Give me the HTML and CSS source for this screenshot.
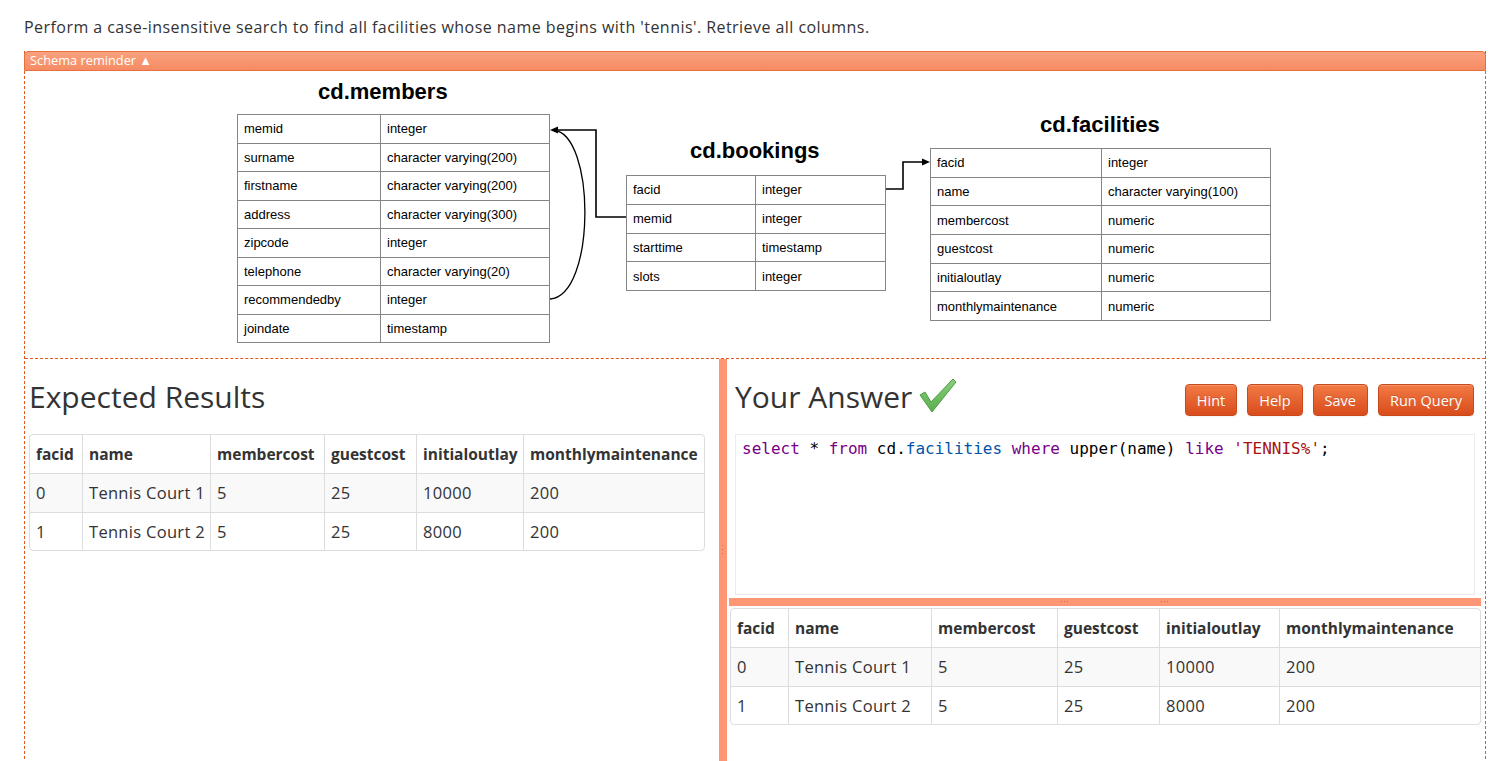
FILE: index.html
```html
<!DOCTYPE html>
<html>
<head>
<meta charset="utf-8">
<link rel="stylesheet" href="styles.css">
</head>
<body>
<div class="page">
  <p class="question">Perform a case-insensitive search to find all facilities whose name begins with 'tennis'. Retrieve all columns.</p>
  <div class="frame">
    <div class="schema-bar">Schema reminder ▲</div>
    <div class="schema">
      <div class="title t-members">cd.members</div>
      <div class="title t-bookings">cd.bookings</div>
      <div class="title t-facilities">cd.facilities</div>

      <table class="erd erd-members">
        <tr><td class="c1">memid</td><td>integer</td></tr>
        <tr><td class="c1">surname</td><td>character varying(200)</td></tr>
        <tr><td class="c1">firstname</td><td>character varying(200)</td></tr>
        <tr><td class="c1">address</td><td>character varying(300)</td></tr>
        <tr><td class="c1">zipcode</td><td>integer</td></tr>
        <tr><td class="c1">telephone</td><td>character varying(20)</td></tr>
        <tr><td class="c1">recommendedby</td><td>integer</td></tr>
        <tr><td class="c1">joindate</td><td>timestamp</td></tr>
      </table>

      <table class="erd erd-bookings">
        <tr><td class="c1">facid</td><td>integer</td></tr>
        <tr><td class="c1">memid</td><td>integer</td></tr>
        <tr><td class="c1">starttime</td><td>timestamp</td></tr>
        <tr><td class="c1">slots</td><td>integer</td></tr>
      </table>

      <table class="erd erd-facilities">
        <tr><td class="c1">facid</td><td>integer</td></tr>
        <tr><td class="c1">name</td><td>character varying(100)</td></tr>
        <tr><td class="c1">membercost</td><td>numeric</td></tr>
        <tr><td class="c1">guestcost</td><td>numeric</td></tr>
        <tr><td class="c1">initialoutlay</td><td>numeric</td></tr>
        <tr><td class="c1">monthlymaintenance</td><td>numeric</td></tr>
      </table>

      <svg class="links" width="1460" height="288" viewBox="0 0 1460 288">
        <path d="M601 146 H571 V59 H530" fill="none" stroke="#000" stroke-width="1.6"/>
        <path d="M525 59 L533 55.5 L533 62.5 Z" fill="#000"/>
        <path d="M525 228 C571 225 571 62 528 59" fill="none" stroke="#000" stroke-width="1.3"/>
        <path d="M861 118 H878 V91 H899" fill="none" stroke="#000" stroke-width="1.6"/>
        <path d="M905 91 L897 87.5 L897 94.5 Z" fill="#000"/>
      </svg>
    </div>

    <div class="lower">
      <div class="pane-left">
        <h2 class="heading">Expected Results</h2>
        <table class="results results-left">
          <colgroup>
            <col class="w-l1"><col class="w-l2"><col class="w-l3"><col class="w-l4"><col class="w-l5"><col class="w-l6">
          </colgroup>
          <thead>
            <tr><th>facid</th><th>name</th><th>membercost</th><th>guestcost</th><th>initialoutlay</th><th>monthlymaintenance</th></tr>
          </thead>
          <tbody>
            <tr><td>0</td><td>Tennis Court 1</td><td>5</td><td>25</td><td>10000</td><td>200</td></tr>
            <tr><td>1</td><td>Tennis Court 2</td><td>5</td><td>25</td><td>8000</td><td>200</td></tr>
          </tbody>
        </table>
      </div>

      <div class="vsplit"><span class="grip-v"></span></div>

      <div class="pane-right">
        <div class="answer-head">
          <h2 class="heading">Your Answer
            <svg class="check" width="38" height="36" viewBox="0 0 38 36">
              <defs>
                <linearGradient id="g" x1="0" y1="0" x2="0" y2="1">
                  <stop offset="0" stop-color="#86d07a"/>
                  <stop offset="1" stop-color="#5aae4d"/>
                </linearGradient>
              </defs>
              <path d="M1 17 L6 14 L12 24 L34 1 L37 4 L13 34 Z" fill="url(#g)" stroke="#4f9c44" stroke-width="1" stroke-linejoin="round"/>
            </svg>
          </h2>
          <div class="buttons">
            <button class="btn">Hint</button>
            <button class="btn">Help</button>
            <button class="btn">Save</button>
            <button class="btn">Run Query</button>
          </div>
        </div>
        <div class="editor"><span class="kw">select</span> * <span class="kw">from</span> cd.<span class="v2">facilities</span> <span class="kw">where</span> upper(name) <span class="kw">like</span> <span class="str">'TENNIS%'</span>;</div>
        <div class="hsplit"><span class="grip-h g1"></span><span class="grip-h g2"></span></div>
        <table class="results results-right">
          <colgroup>
            <col class="w-r1"><col class="w-r2"><col class="w-r3"><col class="w-r4"><col class="w-r5"><col class="w-r6">
          </colgroup>
          <thead>
            <tr><th>facid</th><th>name</th><th>membercost</th><th>guestcost</th><th>initialoutlay</th><th>monthlymaintenance</th></tr>
          </thead>
          <tbody>
            <tr><td>0</td><td>Tennis Court 1</td><td>5</td><td>25</td><td>10000</td><td>200</td></tr>
            <tr><td>1</td><td>Tennis Court 2</td><td>5</td><td>25</td><td>8000</td><td>200</td></tr>
          </tbody>
        </table>
      </div>
    </div>
  </div>
</div>
</body>
</html>
```

FILE: styles.css
```css
html, body {
  margin: 0;
  padding: 0;
  background: #fff;
  overflow: hidden;
}
body {
  font-family: "Open Sans", "Noto Sans", sans-serif;
  color: #333;
}
.page {
  padding: 0 16px 0 24px;
}
.question {
  margin: 0;
  padding-top: 16px;
  height: 35px;
  line-height: 22px;
  font-size: 16px;
  letter-spacing: 0.45px;
  color: #333;
}
.frame {
  border-left: 1px dashed #e2571f;
  border-right: 1px dashed #e2571f;
  border-top: none;
}
.schema-bar {
  margin: 0 -1px;
  height: 18px;
  line-height: 17px;
  border: 1px solid #e8703f;
  border-radius: 4px 4px 0 0;
  background: linear-gradient(#f9a27e, #f58b63);
  color: #fff;
  font-size: 12.8px;
  padding-left: 5px;
}
.schema {
  position: relative;
  height: 287px;
  border-bottom: 1px dashed #e2571f;
  font-family: "Liberation Sans", Arial, sans-serif;
  color: #000;
}
.title {
  position: absolute;
  font-weight: bold;
  font-size: 22px;
  line-height: 26px;
  white-space: nowrap;
}
.t-members { left: 293px; top: 8px; }
.t-bookings { left: 665px; top: 67px; }
.t-facilities { left: 1015px; top: 41px; }

.erd {
  position: absolute;
  border-collapse: collapse;
  font-size: 13px;
  table-layout: fixed;
}
.erd td {
  border: 1px solid #858585;
  padding: 0 0 0 6px;
  white-space: nowrap;
}
.erd-members { left: 212px; top: 43px; width: 313px; height: 228px; }
.erd-members .c1 { width: 136px; }
.erd-members tr { height: 28.5px; }
.erd-bookings { left: 601px; top: 104px; width: 260px; height: 115px; }
.erd-bookings .c1 { width: 122px; }
.erd-bookings tr { height: 28.75px; }
.erd-facilities { left: 905px; top: 77px; width: 341px; height: 172px; }
.erd-facilities .c1 { width: 164px; }
.erd-facilities tr { height: 28.66px; }

.links {
  position: absolute;
  left: 0;
  top: 0;
  pointer-events: none;
}

.lower {
  display: flex;
  height: 420px;
}
.pane-left {
  flex: none;
  width: 690px;
  padding: 18px 0 0 4px;
}
.heading {
  margin: 0;
  font-weight: normal;
  font-size: 30px;
  line-height: 40px;
  height: 40px;
  color: #333;
  display: flex;
  align-items: center;
  white-space: nowrap;
}
.check {
  margin-left: 7px;
  margin-top: -2px;
}
.pane-left .heading {
  margin-bottom: 17px;
}
.vsplit {
  position: relative;
  width: 8px;
  background: #fd9674;
  flex: none;
}
.grip-v {
  position: absolute;
  left: 3px;
  top: 186px;
  width: 1px;
  height: 10px;
  background: repeating-linear-gradient(#c2704f 0 1px, transparent 1px 4px);
}
.pane-right {
  flex: 1;
  min-width: 0;
  padding: 18px 4px 0 2px;
}
.answer-head {
  display: flex;
  justify-content: space-between;
  align-items: center;
  padding: 0 7px 0 6px;
}
.buttons {
  display: flex;
  gap: 10px;
  margin-top: 6px;
}
.btn {
  height: 32px;
  padding: 0 11px;
  border: 1px solid #c84a1c;
  border-radius: 4px;
  background: linear-gradient(#f27a44, #d94c1c);
  color: #fff;
  font-family: "Open Sans", sans-serif;
  font-size: 14.5px;
  text-shadow: 0 -1px 0 rgba(0,0,0,0.15);
  box-shadow: inset 0 1px 0 rgba(255,255,255,0.2), 0 1px 2px rgba(0,0,0,0.05);
}
.editor {
  margin: 17px 6px 0 6px;
  height: 153px;
  border: 1px solid #ececec;
  padding: 3px 6px;
  font-family: "DejaVu Sans Mono", monospace;
  font-size: 16px;
  line-height: 22px;
  color: #000;
  white-space: pre;
}
.kw { color: #770088; }
.v2 { color: #0055aa; }
.str { color: #aa1111; }
.hsplit {
  position: relative;
  margin-top: 3px;
  height: 8px;
  background: #fd9674;
}
.grip-h {
  position: absolute;
  top: 3px;
  width: 8px;
  height: 1px;
  background: repeating-linear-gradient(90deg, #c2704f 0 1px, transparent 1px 3px);
}
.g1 { left: 332px; }
.g2 { left: 432px; }

.results {
  border-collapse: separate;
  border-spacing: 0;
  border: 1px solid #ddd;
  border-radius: 4px;
  font-size: 16.5px;
  letter-spacing: 0.3px;
  table-layout: fixed;
  color: #333;
}
.results th, .results td {
  text-align: left;
  padding: 0 6px;
  border-left: 1px solid #ddd;
  white-space: nowrap;
}
.results th:first-child, .results td:first-child {
  border-left: none;
}
.results th {
  height: 38px;
  font-weight: bold;
  font-size: 15.5px;
  letter-spacing: 0;
}
.results td {
  height: 37.5px;
  border-top: 1px solid #ddd;
}
.results tbody tr:first-child td {
  background: #f9f9f9;
}
.results-left { width: 676px; }
.results-right { width: 751px; margin-top: 2px; margin-left: 1px; }
.w-l1 { width: 52px; }
.w-l2 { width: 128px; }
.w-l3 { width: 114px; }
.w-l4 { width: 92px; }
.w-l5 { width: 107px; }
.w-l6 { width: 181px; }
.w-r1 { width: 57px; }
.w-r2 { width: 143px; }
.w-r3 { width: 126px; }
.w-r4 { width: 102px; }
.w-r5 { width: 120px; }
.w-r6 { width: 201px; }
```
